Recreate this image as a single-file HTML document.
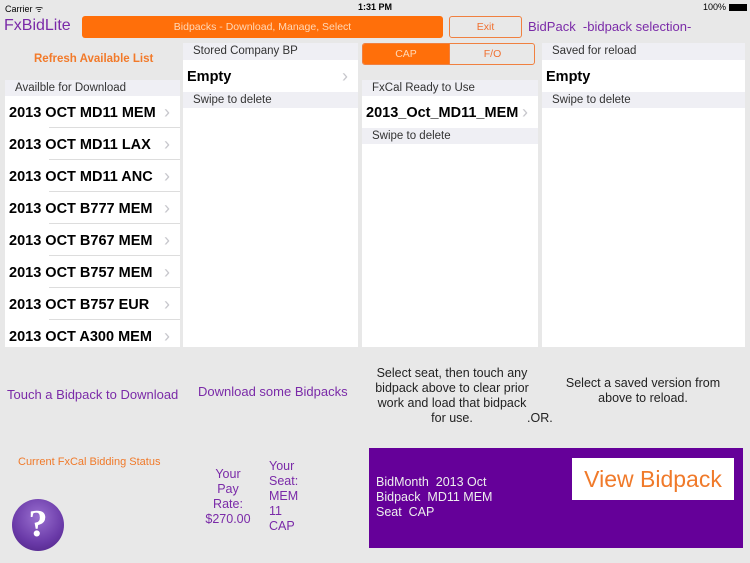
<!DOCTYPE html>
<html><head><style>
*{margin:0;padding:0;box-sizing:border-box}
body{width:750px;height:563px;background:#e8e8e8;font-family:"Liberation Sans",sans-serif;position:relative;overflow:hidden;color:#000}
.a{position:absolute}
.w{background:#fff}
.hd{background:#efeff4;font-size:11.5px;color:#333;padding-left:10px;line-height:16px}
.row{position:absolute;left:0;right:0;height:32px;font-size:14.5px;font-weight:bold;line-height:34px;padding-left:4px;background:#fff}
.row .c{position:absolute;right:10px;top:-1px;color:#c7c7cc;font-weight:normal;font-size:18px}
.sep{position:absolute;left:44px;right:0;height:1px;background:#ddd}
.pu{color:#7a2aa8}
</style></head><body>
<div class="a" style="left:5px;top:2px;font-size:9px">Carrier ᯤ</div>
<div class="a" style="left:358px;top:2px;font-size:9px;font-weight:bold">1:31 PM</div>
<div class="a" style="left:703px;top:2px;font-size:9px">100% <span style="display:inline-block;width:18px;height:7px;background:#000;vertical-align:middle"></span></div>
<div class="a pu" style="left:4px;top:17px;font-size:16px">FxBidLite</div>
<div class="a" style="left:82px;top:16px;width:361px;height:22px;background:#ff6f0a;border-radius:3px;color:#ffd9b8;font-size:10.5px;text-align:center;line-height:22px">Bidpacks - Download, Manage, Select</div>
<div class="a" style="left:449px;top:16px;width:73px;height:22px;border:1px solid #f08040;border-radius:3px;color:#f07030;font-size:10.5px;text-align:center;line-height:20px">Exit</div>
<div class="a pu" style="left:528px;top:19px;font-size:13px">BidPack &nbsp;-bidpack selection-</div>
<div class="a" style="left:34px;top:53px;font-size:11.5px;font-weight:bold;color:#f27a2a">Refresh Available List</div>
<div class="a w" style="left:5px;top:80px;width:175px;height:267px;overflow:hidden">
<div class="hd" style="height:16px">Availble for Download</div>
<div class="row" style="top:16px">2013 OCT MD11 MEM<span class="c">›</span></div>
<div class="row" style="top:48px">2013 OCT MD11 LAX<span class="c">›</span></div>
<div class="row" style="top:80px">2013 OCT MD11 ANC<span class="c">›</span></div>
<div class="row" style="top:112px">2013 OCT B777 MEM<span class="c">›</span></div>
<div class="row" style="top:144px">2013 OCT B767 MEM<span class="c">›</span></div>
<div class="row" style="top:176px">2013 OCT B757 MEM<span class="c">›</span></div>
<div class="row" style="top:208px">2013 OCT B757 EUR<span class="c">›</span></div>
<div class="row" style="top:240px">2013 OCT A300 MEM<span class="c">›</span></div>
<div class="sep" style="top:47px"></div><div class="sep" style="top:79px"></div><div class="sep" style="top:111px"></div><div class="sep" style="top:143px"></div><div class="sep" style="top:175px"></div><div class="sep" style="top:207px"></div><div class="sep" style="top:239px"></div>
</div>
<div class="a w" style="left:183px;top:43px;width:175px;height:304px">
<div class="hd" style="height:17px;line-height:17px">Stored Company BP</div>
<div class="row" style="top:17px">Empty<span class="c">›</span></div>
<div class="hd" style="position:absolute;top:49px;left:0;right:0;height:16px">Swipe to delete</div>
</div>
<div class="a" style="left:362px;top:43px;width:173px;height:22px;border:1px solid #f08040;border-radius:3px;overflow:hidden;font-size:10.5px;line-height:20px;text-align:center">
<div class="a" style="left:0;top:0;width:86px;height:20px;background:#ff6f0a;color:#ffd9b8">CAP</div>
<div class="a" style="left:86px;top:0;width:86px;height:20px;color:#f07030;border-left:1px solid #f08040">F/O</div>
</div>
<div class="a w" style="left:362px;top:80px;width:176px;height:267px">
<div class="hd" style="height:16px">FxCal Ready to Use</div>
<div class="row" style="top:16px">2013_Oct_MD11_MEM<span class="c">›</span></div>
<div class="hd" style="position:absolute;top:48px;left:0;right:0;height:16px">Swipe to delete</div>
</div>
<div class="a w" style="left:542px;top:43px;width:203px;height:304px">
<div class="hd" style="height:17px;line-height:17px">Saved for reload</div>
<div class="row" style="top:17px">Empty</div>
<div class="hd" style="position:absolute;top:49px;left:0;right:0;height:16px">Swipe to delete</div>
</div>
<div class="a pu" style="left:7px;top:387px;font-size:13px">Touch a Bidpack to Download</div>
<div class="a pu" style="left:198px;top:384px;font-size:13px">Download some Bidpacks</div>
<div class="a" style="left:370px;top:366px;width:164px;font-size:12.5px;line-height:15px;text-align:center;color:#222">Select seat, then touch any bidpack above to clear prior work and load that bidpack for use.</div>
<div class="a" style="left:527px;top:411px;font-size:12.5px;color:#222">.OR.</div>
<div class="a" style="left:553px;top:376px;width:180px;font-size:12.5px;line-height:15px;text-align:center;color:#222">Select a saved version from above to reload.</div>
<div class="a" style="left:18px;top:456px;font-size:11px;color:#f07a2a">Current FxCal Bidding Status</div>
<div class="a" style="left:12px;top:499px;width:52px;height:52px;border-radius:50%;background:radial-gradient(circle at 50% 35%,#9a70d0,#6a3aa8 60%,#4a2080);color:#fff;font-size:38px;font-weight:bold;text-align:center;line-height:50px;font-family:'Liberation Serif',serif">?</div>
<div class="a pu" style="left:205px;top:467px;width:46px;text-align:center;font-size:12.5px;line-height:15px">Your Pay Rate: $270.00</div>
<div class="a pu" style="left:269px;top:459px;width:40px;font-size:12.5px;line-height:15px">Your Seat: MEM 11 CAP</div>
<div class="a" style="left:369px;top:448px;width:374px;height:100px;background:#650099"></div>
<div class="a" style="left:376px;top:475px;color:#eee;font-size:12.5px;line-height:15px">BidMonth &nbsp;2013 Oct<br>Bidpack &nbsp;MD11 MEM<br>Seat &nbsp;CAP</div>
<div class="a" style="left:572px;top:458px;width:162px;height:42px;background:#fff;color:#f07a2a;font-size:23px;text-align:center;line-height:42px">View Bidpack</div>
</body></html>
